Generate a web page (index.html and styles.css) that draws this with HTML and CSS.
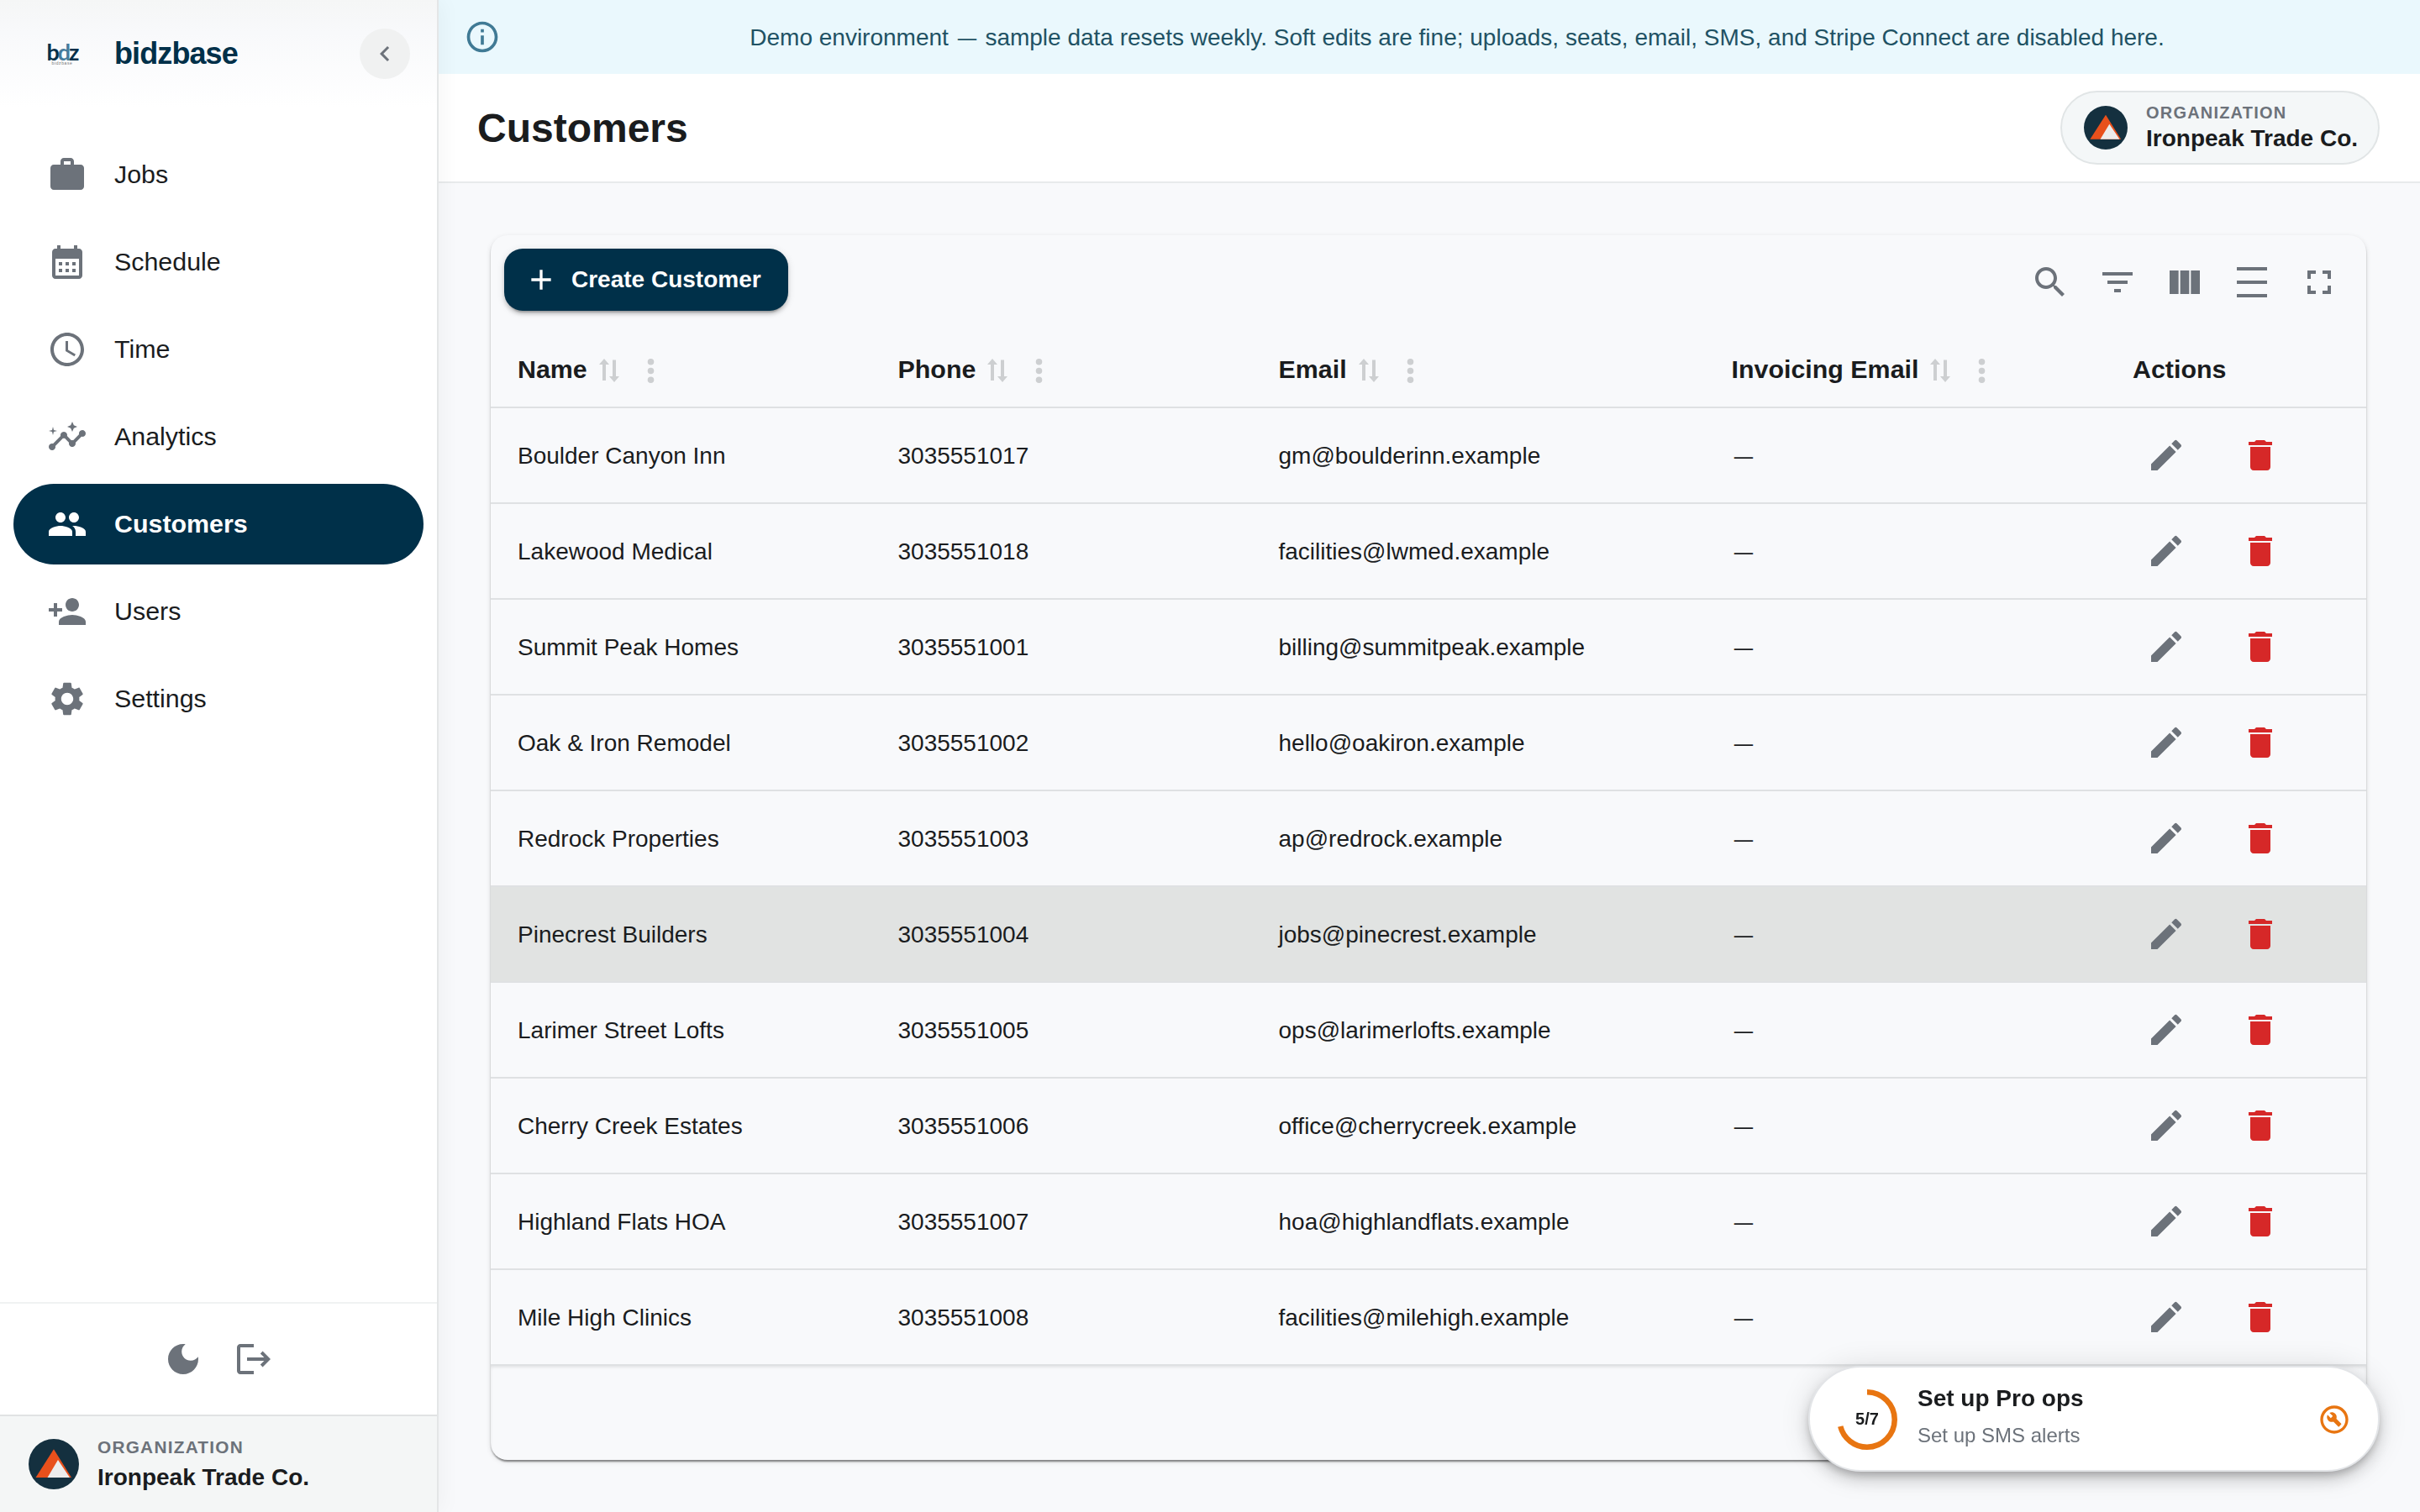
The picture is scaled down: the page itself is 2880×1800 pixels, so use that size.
FILE: index.html
```html
<!DOCTYPE html>
<html lang="en">

<head>
    <meta charset="UTF-8">
    <meta name="viewport" content="width=device-width, initial-scale=1.0">
    <title>Customers - bidzbase</title>
    <link rel="stylesheet" href="styles.css">
</head>

<body>
    <!-- Shared icons -->
    <svg class="sprite" xmlns="http://www.w3.org/2000/svg">
        <symbol id="i-edit" viewBox="0 0 24 24"><path d="M3 17.25V21h3.75L17.81 9.94l-3.75-3.75L3 17.25zM20.71 7.04c.39-.39.39-1.02 0-1.41l-2.34-2.34a.9959.9959 0 0 0-1.41 0l-1.83 1.83 3.75 3.75 1.83-1.83z"/></symbol>
        <symbol id="i-delete" viewBox="0 0 24 24"><path d="M6 19c0 1.1.9 2 2 2h8c1.1 0 2-.9 2-2V7H6v12zM19 4h-3.5l-1-1h-5l-1 1H5v2h14V4z"/></symbol>
        <symbol id="i-sort" viewBox="0 0 24 28"><path d="M6 0l6 7H8v19H4V7H0zM16 1.5h4V21h4l-6 7-6-7h4z"/></symbol>
        <symbol id="i-more" viewBox="0 0 24 24"><circle cx="12" cy="6" r="2.1"/><circle cx="12" cy="12" r="2.1"/><circle cx="12" cy="18" r="2.1"/></symbol>
        <symbol id="i-org" viewBox="0 0 60 60"><circle cx="30" cy="30" r="30" fill="#14303f"/><path d="M30 12.3L51 46H8.5z" fill="#e8501c"/><path d="M35 25L49 46H22.5z" fill="#ececec"/></symbol>
    </svg>

    <div class="app">
        <aside class="sidebar">
            <div class="brand">
                <div class="brand-logo">
                    <span class="brand-mark">b<i>d</i>z</span>
                    <span class="brand-sub">bidzbase</span>
                </div>
                <span class="brand-name">bidzbase</span>
                <button type="button" class="collapse"><svg viewBox="0 0 24 24"><path d="M15.41 7.41L14 6l-6 6 6 6 1.41-1.41L10.83 12z"/></svg></button>
            </div>
            <nav class="nav">
                <a class="nav-item"><svg viewBox="0 0 24 24"><path d="M20 6h-4V4c0-1.11-.89-2-2-2h-4c-1.11 0-2 .89-2 2v2H4c-1.11 0-1.99.89-1.99 2L2 19c0 1.11.89 2 2 2h16c1.11 0 2-.89 2-2V8c0-1.11-.89-2-2-2zm-6 0h-4V4h4v2z"/></svg><span>Jobs</span></a>
                <a class="nav-item"><svg viewBox="0 0 24 24"><path d="M19 4h-1V2h-2v2H8V2H6v2H5c-1.11 0-1.99.9-1.99 2L3 20c0 1.1.89 2 2 2h14c1.1 0 2-.9 2-2V6c0-1.1-.9-2-2-2zm0 16H5V10h14v10zM9 14H7v-2h2v2zm4 0h-2v-2h2v2zm4 0h-2v-2h2v2zm-8 4H7v-2h2v2zm4 0h-2v-2h2v2zm4 0h-2v-2h2v2z"/></svg><span>Schedule</span></a>
                <a class="nav-item"><svg viewBox="0 0 24 24"><path d="M11.99 2C6.47 2 2 6.48 2 12s4.47 10 9.99 10C17.52 22 22 17.52 22 12S17.52 2 11.99 2zM12 20c-4.42 0-8-3.58-8-8s3.58-8 8-8 8 3.58 8 8-3.58 8-8 8zm.5-13H11v6l5.25 3.15.75-1.23-4.5-2.67z"/></svg><span>Time</span></a>
                <a class="nav-item"><svg viewBox="0 0 24 24"><path d="M21 8c-1.45 0-2.26 1.44-1.93 2.51l-3.55 3.56c-.3-.09-.74-.09-1.04 0l-2.55-2.55C12.27 10.45 11.46 9 10 9c-1.45 0-2.27 1.44-1.93 2.52l-4.56 4.55C2.44 15.74 1 16.55 1 18c0 1.1.9 2 2 2 1.45 0 2.26-1.44 1.93-2.51l4.55-4.56c.3.09.74.09 1.04 0l2.55 2.55C12.73 16.55 13.54 18 15 18c1.45 0 2.27-1.44 1.93-2.52l3.56-3.55C21.56 12.26 23 11.45 23 10c0-1.1-.9-2-2-2z"/><path d="M15 9l.94-2.07L18 6l-2.06-.93L15 3l-.92 2.07L12 6l2.08.93zM3.5 11L4 9l2-.5L4 8l-.5-2L3 8l-2 .5L3 9z"/></svg><span>Analytics</span></a>
                <a class="nav-item active"><svg viewBox="0 0 24 24"><path d="M16 11c1.66 0 2.99-1.34 2.99-3S17.66 5 16 5c-1.66 0-3 1.34-3 3s1.34 3 3 3zm-8 0c1.66 0 2.99-1.34 2.99-3S9.66 5 8 5C6.34 5 5 6.34 5 8s1.34 3 3 3zm0 2c-2.33 0-7 1.17-7 3.5V19h14v-2.5c0-2.33-4.67-3.5-7-3.5zm8 0c-.29 0-.62.02-.97.05 1.16.84 1.97 1.97 1.97 3.45V19h6v-2.5c0-2.33-4.67-3.5-7-3.5z"/></svg><span>Customers</span></a>
                <a class="nav-item"><svg viewBox="0 0 24 24"><path d="M15 12c2.21 0 4-1.79 4-4s-1.79-4-4-4-4 1.79-4 4 1.79 4 4 4zm-9-2V7H4v3H1v2h3v3h2v-3h3v-2H6zm9 4c-2.67 0-8 1.34-8 4v2h16v-2c0-2.66-5.33-4-8-4z"/></svg><span>Users</span></a>
                <a class="nav-item"><svg viewBox="0 0 24 24"><path d="M19.14 12.94c.04-.3.06-.61.06-.94 0-.32-.02-.64-.07-.94l2.03-1.58c.18-.14.23-.41.12-.61l-1.92-3.32c-.12-.22-.37-.29-.59-.22l-2.39.96c-.5-.38-1.03-.7-1.62-.94l-.36-2.54c-.04-.24-.24-.41-.48-.41h-3.84c-.24 0-.43.17-.47.41l-.36 2.54c-.59.24-1.13.57-1.62.94l-2.39-.96c-.22-.08-.47 0-.59.22L2.74 8.87c-.12.21-.08.47.12.61l2.03 1.58c-.05.3-.09.63-.09.94s.02.64.07.94l-2.03 1.58c-.18.14-.23.41-.12.61l1.92 3.32c.12.22.37.29.59.22l2.39-.96c.5.38 1.03.7 1.62.94l.36 2.54c.05.24.24.41.48.41h3.84c.24 0 .44-.17.47-.41l.36-2.54c.59-.24 1.13-.56 1.62-.94l2.39.96c.22.08.47 0 .59-.22l1.92-3.32c.12-.22.07-.47-.12-.61l-2.01-1.58zM12 15.6c-1.98 0-3.6-1.62-3.6-3.6s1.62-3.6 3.6-3.6 3.6 1.62 3.6 3.6-1.62 3.6-3.6 3.6z"/></svg><span>Settings</span></a>
            </nav>
            <div class="sidebar-tools">
                <svg viewBox="0 0 24 24"><path d="M12 3c-4.97 0-9 4.03-9 9s4.03 9 9 9 9-4.03 9-9c0-.46-.04-.92-.1-1.36-.98 1.37-2.58 2.26-4.4 2.26-2.98 0-5.4-2.42-5.4-5.4 0-1.81.89-3.42 2.26-4.4-.44-.06-.9-.1-1.36-.1z"/></svg>
                <svg viewBox="0 0 24 24"><path d="M12 3H4c-1.1 0-2 .9-2 2v14c0 1.1.9 2 2 2h8v-2H4V5h8z"/><path d="M17.3 7.3l-1.4 1.4 2.3 2.3H8v2h10.2l-2.3 2.3 1.4 1.4L22 12z"/></svg>
            </div>
            <div class="sidebar-org">
                <svg class="avatar"><use href="#i-org"/></svg>
                <div>
                    <div class="org-label">ORGANIZATION</div>
                    <div class="org-name">Ironpeak Trade Co.</div>
                </div>
            </div>
        </aside>

        <main class="main">
            <div class="banner">
                <svg viewBox="0 0 24 24"><path d="M11 7h2v2h-2zm0 4h2v6h-2zm1-9C6.48 2 2 6.48 2 12s4.48 10 10 10 10-4.48 10-10S17.52 2 12 2zm0 18c-4.41 0-8-3.59-8-8s3.59-8 8-8 8 3.59 8 8-3.59 8-8 8z"/></svg>
                <p>Demo environment <span class="dash">—</span> sample data resets weekly. Soft edits are fine; uploads, seats, email, SMS, and Stripe Connect are disabled here.</p>
            </div>
            <header class="header">
                <h1>Customers</h1>
                <div class="org-pill">
                    <svg class="avatar"><use href="#i-org"/></svg>
                    <div>
                        <div class="org-label">ORGANIZATION</div>
                        <div class="org-name">Ironpeak Trade Co.</div>
                    </div>
                </div>
            </header>

            <section class="card">
                <div class="toolbar">
                    <button type="button" class="create"><svg viewBox="0 0 24 24"><path d="M19 13h-6v6h-2v-6H5v-2h6V5h2v6h6v2z"/></svg>Create Customer</button>
                    <div class="toolbar-icons">
                        <svg viewBox="0 0 24 24"><path d="M15.5 14h-.79l-.28-.27C15.41 12.59 16 11.11 16 9.5 16 5.91 13.09 3 9.5 3S3 5.91 3 9.5 5.91 16 9.5 16c1.61 0 3.09-.59 4.23-1.57l.27.28v.79l5 4.99L20.49 19l-4.99-5zm-6 0C7.01 14 5 11.99 5 9.5S7.01 5 9.5 5 14 7.01 14 9.5 11.99 14 9.5 14z"/></svg>
                        <svg viewBox="0 0 24 24"><path d="M10 18h4v-2h-4v2zM3 6v2h18V6H3zm3 7h12v-2H6v2z"/></svg>
                        <svg viewBox="0 0 24 24"><path d="M14.67 5v14H9.33V5h5.34zm1 14H21V5h-5.33v14zm-7.34 0V5H3v14h5.33z"/></svg>
                        <svg viewBox="0 0 24 24"><path d="M3 3h18v2H3zm0 16h18v2H3zm0-8h18v2H3z"/></svg>
                        <svg viewBox="0 0 24 24"><path d="M7 14H5v5h5v-2H7v-3zm-2-4h2V7h3V5H5v5zm12 7h-3v2h5v-5h-2v3zM14 5v2h3v3h2V5h-5z"/></svg>
                    </div>
                </div>
                <div class="row head">
                    <div>Name<svg class="sort"><use href="#i-sort"/></svg><svg class="more"><use href="#i-more"/></svg></div>
                    <div>Phone<svg class="sort"><use href="#i-sort"/></svg><svg class="more"><use href="#i-more"/></svg></div>
                    <div>Email<svg class="sort"><use href="#i-sort"/></svg><svg class="more"><use href="#i-more"/></svg></div>
                    <div>Invoicing Email<svg class="sort"><use href="#i-sort"/></svg><svg class="more"><use href="#i-more"/></svg></div>
                    <div>Actions</div>
                </div>
                <div id="rows"></div>
                <div class="card-footer"></div>
            </section>
        </main>
    </div>

    <div class="setup">
        <div class="progress">
            <svg viewBox="22 22 44 44"><circle cx="44" cy="44" r="20" fill="none" stroke="#e87511" stroke-width="4" pathLength="7" stroke-dasharray="5 7"/></svg>
            <span>5/7</span>
        </div>
        <div class="setup-text">
            <div class="setup-title">Set up Pro ops</div>
            <div class="setup-sub">Set up SMS alerts</div>
        </div>
        <svg class="setup-icon" viewBox="0 0 24 24"><path d="M12 2C6.48 2 2 6.48 2 12s4.48 10 10 10 10-4.48 10-10S17.52 2 12 2zm0 18c-4.41 0-8-3.59-8-8s3.59-8 8-8 8 3.59 8 8-3.59 8-8 8z"/><path d="M13.49 11.38c.43-1.22.17-2.64-.81-3.62-1.11-1.11-2.79-1.3-4.1-.59l2.35 2.35-1.41 1.41-2.35-2.35c-.71 1.32-.52 2.99.59 4.1.98.98 2.4 1.24 3.62.81l3.41 3.41c.2.2.51.2.71 0l1.4-1.4c.2-.2.2-.51 0-.71l-3.41-3.41z"/></svg>
    </div>

    <script>
        const customers = [
            ['Boulder Canyon Inn', '3035551017', 'gm@boulderinn.example'],
            ['Lakewood Medical', '3035551018', 'facilities@lwmed.example'],
            ['Summit Peak Homes', '3035551001', 'billing@summitpeak.example'],
            ['Oak & Iron Remodel', '3035551002', 'hello@oakiron.example'],
            ['Redrock Properties', '3035551003', 'ap@redrock.example'],
            ['Pinecrest Builders', '3035551004', 'jobs@pinecrest.example'],
            ['Larimer Street Lofts', '3035551005', 'ops@larimerlofts.example'],
            ['Cherry Creek Estates', '3035551006', 'office@cherrycreek.example'],
            ['Highland Flats HOA', '3035551007', 'hoa@highlandflats.example'],
            ['Mile High Clinics', '3035551008', 'facilities@milehigh.example'],
        ];
        const hovered = 5;

        document.getElementById('rows').innerHTML = customers.map(([name, phone, email], i) => `
            <div class="row${i === hovered ? ' hovered' : ''}">
                <div class="cell">${name.replace('&', '&amp;')}</div>
                <div class="cell">${phone}</div>
                <div class="cell">${email}</div>
                <div class="cell"><span class="dash">—</span></div>
                <div class="actions">
                    <svg><use href="#i-edit"/></svg>
                    <svg class="delete"><use href="#i-delete"/></svg>
                </div>
            </div>`).join('');
    </script>
</body>

</html>
```
FILE: styles.css
```css
* {
    box-sizing: border-box;
}

body {
    margin: 0;
    font-family: "Liberation Sans", Helvetica, Arial, sans-serif;
    font-size: 28px;
    color: #1a1c1e;
    background: #f8f9fb;
}

svg {
    display: block;
    flex-shrink: 0;
    fill: currentColor;
}

button {
    border: none;
    font-family: inherit;
    cursor: pointer;
}

.sprite {
    position: absolute;
    width: 0;
    height: 0;
}

.dash {
    display: inline-block;
    transform: scaleX(0.8);
}

.app {
    display: flex;
    height: 1800px;
}

/* Sidebar */
.sidebar {
    position: relative;
    z-index: 1;
    display: flex;
    flex-direction: column;
    width: 522px;
    flex-shrink: 0;
    background: #fff;
    border-right: 2px solid #e4e6e7;
    box-shadow: 4px 0 24px rgba(0, 0, 0, 0.04);
}

.brand {
    display: flex;
    align-items: center;
    height: 128px;
    padding: 0 32px 0 54px;
    background: linear-gradient(#f5f6f6, #f8f9fb 30%, #fff);
}

.brand-logo {
    display: flex;
    flex-direction: column;
    align-items: center;
    width: 40px;
    margin-right: 42px;
}

.brand-mark {
    font-family: Lato, "Open Sans", sans-serif;
    font-size: 27px;
    font-weight: bold;
    line-height: 22px;
    letter-spacing: -2px;
    color: #06304a;
}

.brand-mark i {
    font-style: normal;
    color: #457b9d;
}

.brand-sub {
    font-size: 5px;
    line-height: 5px;
    letter-spacing: 0.6px;
    color: #777;
}

.brand-name {
    font-size: 36px;
    font-weight: bold;
    letter-spacing: -0.9px;
    color: #003049;
}

.collapse {
    display: flex;
    align-items: center;
    justify-content: center;
    width: 60px;
    height: 60px;
    margin-left: auto;
    padding: 0;
    border-radius: 50%;
    background: #f0f1f1;
    color: #6c727a;
}

.collapse svg {
    width: 36px;
    height: 36px;
}

.nav {
    display: flex;
    flex-direction: column;
    gap: 8px;
    flex: 1;
    padding: 32px 16px;
}

.nav-item {
    display: flex;
    align-items: center;
    gap: 32px;
    height: 96px;
    padding-left: 40px;
    border-radius: 48px;
    font-size: 30.4px;
}

.nav-item span {
    margin-top: -2px;
}

.nav-item svg {
    width: 48px;
    height: 48px;
    color: #6c727a;
}

.nav-item.active {
    background: #003049;
    color: #fff;
    font-weight: bold;
}

.nav-item.active svg {
    color: #fff;
}

.sidebar-tools {
    display: flex;
    align-items: center;
    justify-content: center;
    gap: 36px;
    height: 134px;
    border-top: 2px solid #f0f2f2;
    color: #6c727a;
}

.sidebar-tools svg {
    width: 48px;
    height: 48px;
}

.sidebar-org {
    display: flex;
    align-items: center;
    gap: 22px;
    height: 116px;
    padding-left: 34px;
    border-top: 2px solid #e1e3e4;
    background: #f4f6f6;
}

.avatar {
    width: 60px;
    height: 60px;
}

.org-label {
    font-size: 20.8px;
    font-weight: bold;
    line-height: 26px;
    letter-spacing: 0.06em;
    color: #6c727a;
}

.org-name {
    margin-top: 6px;
    font-weight: bold;
    line-height: 34px;
}

/* Main area */
.main {
    flex: 1;
    min-width: 0;
}

.banner {
    display: flex;
    align-items: center;
    height: 88px;
    padding: 0 8px 0 30px;
    background: #eaf8fd;
    color: #1f5264;
}

.banner svg {
    width: 44px;
    height: 44px;
    color: #407a95;
}

.banner p {
    flex: 1;
    margin: 2px 0 0;
    text-align: center;
}

.header {
    display: flex;
    align-items: center;
    justify-content: space-between;
    height: 130px;
    padding: 0 48px 0 46px;
    background: #fff;
    border-bottom: 2px solid #e8eaeb;
}

.header h1 {
    margin: 0;
    font-size: 48px;
}

.org-pill {
    display: flex;
    align-items: center;
    gap: 22px;
    width: 380px;
    height: 88px;
    padding-left: 26px;
    border: 2px solid #e1e5e6;
    border-radius: 44px;
    background: #f4f7f8;
}

.org-pill .avatar {
    width: 52px;
    height: 52px;
}

.org-pill .org-label {
    font-size: 20px;
    line-height: 24px;
}

.org-pill .org-name {
    margin-top: 2px;
}

/* Table card */
.card {
    width: 2232px;
    height: 1458px;
    margin: 62px 0 0 62px;
    border-radius: 20px;
    overflow: hidden;
    background: #f8f9fb;
    box-shadow: 0 4px 2px -2px rgba(0, 0, 0, 0.3), 0 2px 2px rgba(0, 0, 0, 0.14), 0 2px 6px rgba(0, 0, 0, 0.12), 0 2px 1px 1px rgba(0, 0, 0, 0.04);
}

.toolbar {
    display: flex;
    align-items: flex-start;
    justify-content: space-between;
    height: 114px;
    padding: 16px 32px 0 16px;
}

.create {
    display: flex;
    align-items: center;
    gap: 16px;
    height: 74px;
    padding: 0 32px 0 24px;
    border-radius: 22px;
    background: #003049;
    color: #fff;
    font-size: 28px;
    font-weight: bold;
    box-shadow: 0 6px 2px -4px rgba(0, 0, 0, 0.2), 0 4px 4px rgba(0, 0, 0, 0.14), 0 2px 10px rgba(0, 0, 0, 0.12);
}

.create svg {
    width: 40px;
    height: 40px;
}

.toolbar-icons {
    display: flex;
    gap: 32px;
    padding-top: 16px;
    color: #6c727a;
}

.toolbar-icons svg {
    width: 48px;
    height: 48px;
}

.row {
    display: grid;
    grid-template-columns: 452.5px 453px 539px 477.5px 1fr;
    align-items: center;
    height: 114px;
    padding-left: 32px;
    border-bottom: 2px solid #dfe1e3;
}

.cell {
    padding-top: 2px;
}

.row.head {
    height: 92px;
    font-size: 30.4px;
    font-weight: bold;
}

.row.head > div {
    display: flex;
    align-items: center;
}

.sort {
    width: 24px;
    height: 28px;
    margin: 4px 0 0 14px;
    color: #cdcfd1;
}

.more {
    width: 43px;
    height: 43px;
    margin: 4px 0 0 16px;
    color: #cdcfd1;
}

.row.hovered {
    background: #e1e3e2;
}

.actions {
    display: flex;
    gap: 64px;
    padding-left: 16px;
    color: #6c727a;
}

.actions svg {
    width: 48px;
    height: 48px;
}

.actions .delete {
    color: #d62828;
}

.card-footer {
    height: 112px;
    box-shadow: inset 0 2px 4px -1px rgba(0, 0, 0, 0.12);
}

/* Setup progress popup */
.setup {
    position: fixed;
    right: 48px;
    bottom: 48px;
    z-index: 2;
    display: flex;
    align-items: center;
    width: 680px;
    height: 126px;
    padding: 2px 32px 0;
    border: 2px solid #e3e5e8;
    border-radius: 63px;
    background: #fff;
    box-shadow: 0 6px 10px -2px rgba(0, 0, 0, 0.2), 0 10px 20px rgba(0, 0, 0, 0.14), 0 2px 36px rgba(0, 0, 0, 0.12);
}

.progress {
    position: relative;
    width: 72px;
    height: 72px;
    margin-right: 24px;
}

.progress svg {
    width: 72px;
    height: 72px;
    transform: rotate(-90deg);
}

.progress span {
    position: absolute;
    inset: 0;
    font-size: 20px;
    font-weight: bold;
    line-height: 71px;
    text-align: center;
}

.setup-text {
    flex: 1;
    margin-top: -8px;
}

.setup-title {
    font-weight: bold;
    line-height: 42px;
}

.setup-sub {
    margin-top: 3px;
    font-size: 24px;
    line-height: 40px;
    color: #6c727a;
}

.setup-icon {
    width: 40px;
    height: 40px;
    color: #e87511;
}
```
